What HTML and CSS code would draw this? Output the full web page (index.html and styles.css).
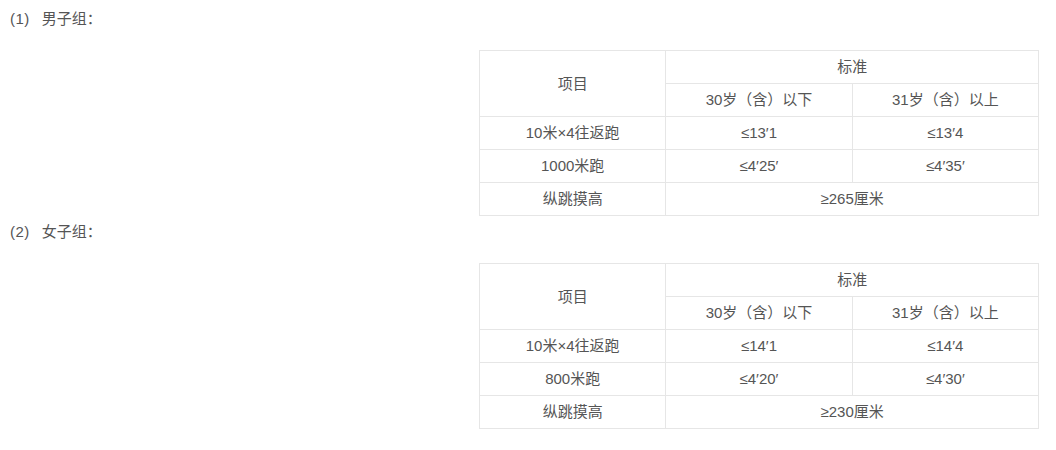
FILE: index.html
```html
<!DOCTYPE html>
<html lang="zh-CN">
<head>
<meta charset="utf-8">
<link rel="stylesheet" href="styles.css">
</head>
<body>
<div class="page">
  <p class="group-title"><span class="num">(1)</span>男子组：</p>
  <div class="table-wrap">
    <table class="std">
      <tr>
        <td rowspan="2">项目</td>
        <td colspan="2">标准</td>
      </tr>
      <tr>
        <td>30岁（含）以下</td>
        <td>31岁（含）以上</td>
      </tr>
      <tr>
        <td>10米×4往返跑</td>
        <td>≤13′1</td>
        <td>≤13′4</td>
      </tr>
      <tr>
        <td>1000米跑</td>
        <td>≤4′25′</td>
        <td>≤4′35′</td>
      </tr>
      <tr>
        <td>纵跳摸高</td>
        <td colspan="2">≥265厘米</td>
      </tr>
    </table>
  </div>
  <p class="group-title second"><span class="num">(2)</span>女子组：</p>
  <div class="table-wrap">
    <table class="std">
      <tr>
        <td rowspan="2">项目</td>
        <td colspan="2">标准</td>
      </tr>
      <tr>
        <td>30岁（含）以下</td>
        <td>31岁（含）以上</td>
      </tr>
      <tr>
        <td>10米×4往返跑</td>
        <td>≤14′1</td>
        <td>≤14′4</td>
      </tr>
      <tr>
        <td>800米跑</td>
        <td>≤4′20′</td>
        <td>≤4′30′</td>
      </tr>
      <tr>
        <td>纵跳摸高</td>
        <td colspan="2">≥230厘米</td>
      </tr>
    </table>
  </div>
</div>
</body>
</html>
```
FILE: styles.css
```css
html, body {
  margin: 0;
  padding: 0;
  background: #fff;
}
body {
  font-family: "Liberation Sans", Arial, "Noto Sans CJK SC", sans-serif;
  font-size: 15px;
  color: #555;
}
.page {
  padding: 7px 17px 0 10px;
}
.group-title {
  margin: 0;
  line-height: 24px;
}
.group-title .num {
  display: inline-block;
  margin-right: 12px;
  letter-spacing: 0.5px;
}
.group-title.second {
  margin-top: 4px;
}
.table-wrap {
  display: flex;
  justify-content: flex-end;
  margin-top: 19px;
}
.std {
  border-collapse: collapse;
  width: 560px;
  table-layout: fixed;
}
.std td {
  border: 1px solid #e6e6e6;
  padding: 6px 4px;
  line-height: 20px;
  height: 20px;
  text-align: center;
  vertical-align: middle;
}
```
